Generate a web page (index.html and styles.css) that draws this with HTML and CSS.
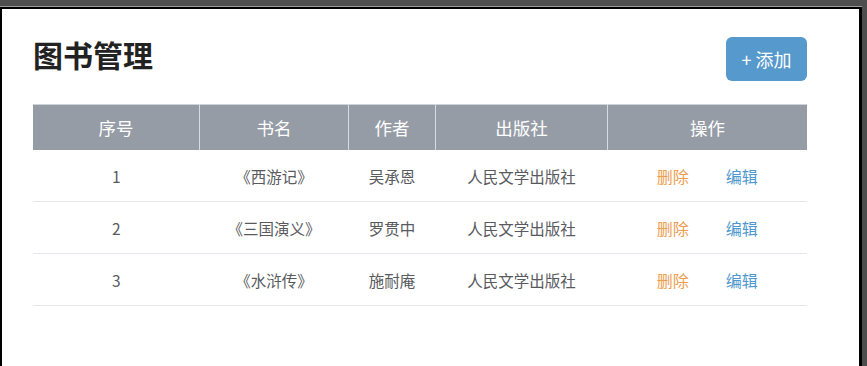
FILE: index.html
```html
<!DOCTYPE html>
<html lang="zh-CN">
<head>
  <meta charset="UTF-8">
  <meta name="viewport" content="width=device-width, initial-scale=1.0">
  <title>图书管理</title>
  <link rel="stylesheet" href="styles.css">
</head>
<body>
  <div class="window">
    <div class="page-head">
      <h1>图书管理</h1>
      <button type="button" class="btn-add">+ 添加</button>
    </div>
    <table class="book-table">
      <thead>
        <tr>
          <th class="col-no">序号</th>
          <th class="col-name">书名</th>
          <th class="col-author">作者</th>
          <th class="col-press">出版社</th>
          <th class="col-ops">操作</th>
        </tr>
      </thead>
      <tbody>
        <tr>
          <td>1</td>
          <td>《西游记》</td>
          <td>吴承恩</td>
          <td>人民文学出版社</td>
          <td><a href="#" class="link-del">删除</a><a href="#" class="link-edit">编辑</a></td>
        </tr>
        <tr>
          <td>2</td>
          <td>《三国演义》</td>
          <td>罗贯中</td>
          <td>人民文学出版社</td>
          <td><a href="#" class="link-del">删除</a><a href="#" class="link-edit">编辑</a></td>
        </tr>
        <tr>
          <td>3</td>
          <td>《水浒传》</td>
          <td>施耐庵</td>
          <td>人民文学出版社</td>
          <td><a href="#" class="link-del">删除</a><a href="#" class="link-edit">编辑</a></td>
        </tr>
      </tbody>
    </table>
  </div>
</body>
</html>
```

FILE: styles.css
```css
html,
body {
  height: 100%;
}

body {
  margin: 0;
  padding-top: 7px;
  box-sizing: border-box;
  background-color: #4e4e4e;
  font-family: "Noto Sans CJK SC", "Microsoft YaHei", sans-serif;
  overflow: hidden;
}

.window {
  width: 862px;
  height: 100%;
  box-sizing: border-box;
  background-color: #fff;
  border-top: 2px solid #000;
  border-left: 2px solid #000;
  border-right: 3px solid #000;
  box-shadow: 0 -1px 0 #9a9a9a;
  padding: 28px 0 0 31px;
}

.page-head {
  width: 774px;
  display: flex;
  justify-content: space-between;
  align-items: flex-start;
}

h1 {
  margin: 0;
  font-size: 30px;
  line-height: 34px;
  font-weight: bold;
  color: #222;
}

.btn-add {
  width: 81px;
  height: 44px;
  border: none;
  border-radius: 6px;
  background-color: #5699cc;
  color: #fff;
  font-family: inherit;
  font-size: 18px;
  cursor: pointer;
}

.book-table {
  width: 774px;
  margin-top: 23px;
  border-collapse: collapse;
  text-align: center;
}

.book-table th {
  height: 45px;
  padding: 0;
  background-color: #959ca6;
  color: #fff;
  font-size: 17.5px;
  font-weight: normal;
  border-top: 1px solid #cfd3d8;
  border-right: 1px solid #d8dbdf;
}

.book-table th:last-child {
  border-right: none;
}

.col-no { width: 166px; }
.col-name { width: 148px; }
.col-author { width: 86px; }
.col-press { width: 171px; }

.book-table td {
  height: 51px;
  padding: 0;
  color: #585a5e;
  font-size: 15.5px;
  border-bottom: 1px solid #e4e7ed;
}

.book-table td a {
  text-decoration: none;
  font-size: 16px;
}

.link-del {
  color: #eb9e4f;
  margin-right: 37px;
}

.link-edit {
  color: #4d98cf;
}
```
